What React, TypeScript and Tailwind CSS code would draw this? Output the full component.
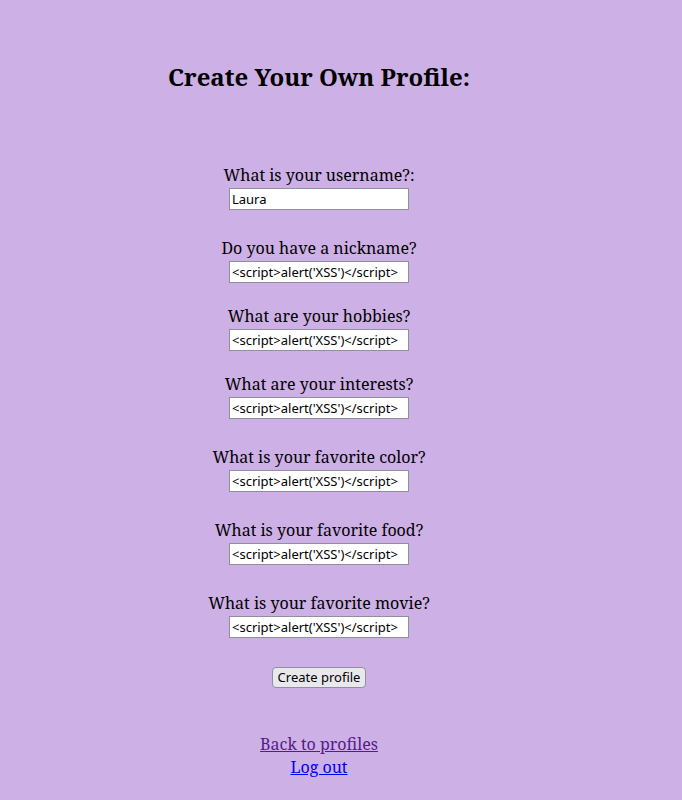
const questions = [
  { label: "What is your username?:", value: "Laura", gap: "mt-[71px]" },
  { label: "Do you have a nickname?", value: "<script>alert('XSS')</script>", gap: "mt-[27px]" },
  { label: "What are your hobbies?", value: "<script>alert('XSS')</script>", gap: "mt-[22px]" },
  { label: "What are your interests?", value: "<script>alert('XSS')</script>", gap: "mt-[22px]" },
  { label: "What is your favorite color?", value: "<script>alert('XSS')</script>", gap: "mt-[27px]" },
  { label: "What is your favorite food?", value: "<script>alert('XSS')</script>", gap: "mt-[27px]" },
  { label: "What is your favorite movie?", value: "<script>alert('XSS')</script>", gap: "mt-[27px]" },
];

export default function App() {
  return (
    <div className="min-h-screen bg-[#cdb0e5] text-black font-['Noto_Serif','DejaVu_Serif',serif]">
      <div className="w-[638px] flex flex-col items-center pt-[61px] pb-6">
        <h2 className="text-[24px] leading-[32px] font-bold">Create Your Own Profile:</h2>

        {questions.map((q) => (
          <div key={q.label} className={`${q.gap} flex flex-col items-center`}>
            <label className="text-[16px] leading-[22px]">{q.label}</label>
            <input
              type="text"
              defaultValue={q.value}
              className="mt-[2px] w-[180px] h-[22px] bg-white border border-[#8f8f9d] px-[2px] text-[13px] text-black font-['Noto_Sans','Open_Sans',sans-serif] outline-none"
            />
          </div>
        ))}

        <button className="mt-[29px] h-[21px] px-[5px] bg-[#e9e9ed] border border-[#8f8f9d] rounded-[4px] text-[13px] leading-none text-black font-['Noto_Sans','Open_Sans',sans-serif]">
          Create profile
        </button>

        <a href="#" className="mt-[45px] text-[16px] leading-[23px] underline text-[#551a8b]">
          Back to profiles
        </a>
        <a href="#" className="text-[16px] leading-[23px] underline text-[#0000ee]">
          Log out
        </a>
      </div>
    </div>
  );
}
